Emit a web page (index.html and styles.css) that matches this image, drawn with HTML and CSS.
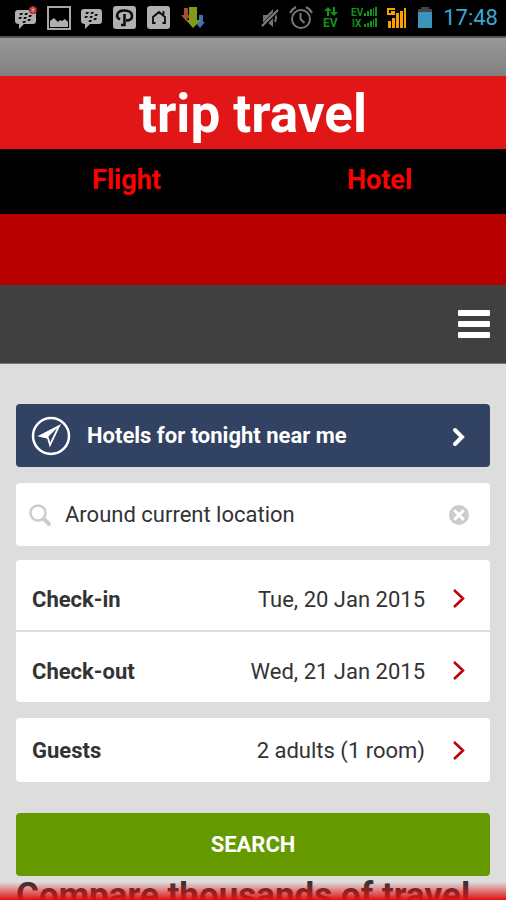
FILE: index.html
```html
<!DOCTYPE html>
<html lang="en">
<head>
<meta charset="utf-8">
<meta name="viewport" content="width=device-width, initial-scale=1">
<title>trip travel</title>
<link rel="stylesheet" href="styles.css">
</head>
<body>
<div class="app">
  <div class="status">
    <div class="status-group notices">
      <svg width="22" height="24" viewBox="0 0 22 24" aria-hidden="true">
        <path d="M3 4h15q3 0 3 3v8q0 3-3 3H9l-5 5v-5q-4 0-4-3V7q0-3 3-3z" fill="#b0b0b0"/>
        <path d="M5 7h3l-1 2H4.500zM10 7h3l-1 2H9.500zM4 11h3l-1 2H3.500zM9 11h3l-1 2H8.500zM14 9h3l-1 2h-2.500zM8 15h3l-1 2H7.500zM13 13h3l-1 2h-2.500z" fill="#111"/>
        <circle cx="18" cy="4" r="4" fill="#a51d24"/>
        <path d="M18 1v6M15.500 2.500l5 3M20.500 2.500l-5 3" stroke="#d8a0a0" stroke-width="1"/>
      </svg>
      <svg width="24" height="24" viewBox="0 0 24 24" aria-hidden="true">
        <path d="M1 1h22v22H1z" fill="none" stroke="#a8a8a8" stroke-width="2"/>
        <path d="M3 21v-6l4-3 4 4 2-2 2 1 3-2 3 3v5z" fill="#b0b0b0"/>
      </svg>
      <svg width="22" height="24" viewBox="0 0 22 24" aria-hidden="true">
        <path d="M3 3h15q3 0 3 3v9q0 3-3 3H9l-5 5v-5q-4 0-4-3V6q0-3 3-3z" fill="#b0b0b0"/>
        <path d="M5 6h3l-1 2H4.500zM10 6h3l-1 2H9.500zM4 10h3l-1 2H3.500zM9 10h3l-1 2H8.500zM14 8h3l-1 2h-2.500zM8 14h3l-1 2H7.500zM13 12h3l-1 2h-2.500z" fill="#111"/>
      </svg>
      <svg width="24" height="24" viewBox="0 0 24 24" aria-hidden="true">
        <rect width="23" height="23" y="0" rx="3" fill="#b0b0b0"/>
        <path d="M7 13.500C2 11 4 4.500 11 4.500c5 0 8 2 8 5.500S16 14.500 13 14.500M11.500 8v12M8 19h4" fill="none" stroke="#0a0a0a" stroke-width="2.500"/>
      </svg>
      <svg width="24" height="24" viewBox="0 0 24 24" aria-hidden="true">
        <rect width="23" height="23" y="0" rx="3" fill="#b0b0b0"/>
        <path d="M8.500 17H6v-6l6-5 6 5v6h-2.500M16.500 5v5" fill="none" stroke="#0a0a0a" stroke-width="1.800"/>
      </svg>
      <svg width="24" height="24" viewBox="0 0 24 24" aria-hidden="true">
        <path d="M3 2h4v7h3l-5 6-5-6h3z" fill="#a64b3d"/>
        <path d="M18 9h4v7h2l-5 6-5-6h4z" fill="#3975b5"/>
        <path d="M8 1h8v13h4l-8 8-7-8h3z" fill="#829b16"/>
      </svg>
    </div>
    <div class="status-group signals">
      <svg width="18" height="22" viewBox="0 0 18 22" aria-hidden="true">
        <path d="M2 8h4l6-6v18l-6-5H2z" fill="#717171"/>
        <path d="M14 7q2 4 0 8" fill="none" stroke="#717171" stroke-width="2"/>
        <path d="M1 20L17 3" stroke="#000" stroke-width="4"/>
        <path d="M1 19L17 3" stroke="#858585" stroke-width="2"/>
      </svg>
      <svg width="24" height="24" viewBox="0 0 24 24" aria-hidden="true">
        <g fill="none" stroke="#777" stroke-width="2">
          <circle cx="12" cy="13" r="9"/>
          <path d="M11.500 7v6l4 4M1 7q2-4 6-6M23 7q-2-4-6-6"/>
        </g>
      </svg>
      <svg width="18" height="24" viewBox="0 0 18 24" aria-hidden="true">
        <path d="M5 1l4 4H6v5H4V5H1zM11 10l4-4h-3V1h-2v5H7z" fill="#12941a"/>
        <text x="0" y="21" class="mark mark-large">EV</text>
      </svg>
      <svg width="26" height="24" viewBox="0 0 26 24" aria-hidden="true">
        <text x="0" y="10" class="mark">EV</text>
        <text x="1" y="21" class="mark">IX</text>
        <path d="M13 7h2v3h-2zM16 5h2v5h-2zM19 3h2v7h-2zM22 2h1v8h-1zM24 1h2v9h-2zM13 18h2v3h-2zM16 17h2v4h-2zM19 15h2v6h-2zM22 13h1v8h-1zM24 12h2v9h-2z" fill="#12941a"/>
      </svg>
      <svg width="20" height="22" viewBox="0 0 20 22" aria-hidden="true">
        <path d="M1 14h3v7H1zM5 11h3v10H5zM9 6h3v15H9zM13 4h3v17h-3zM17 1h2v20h-2z" fill="#f9a000"/>
        <path d="M8 2H1v5h6V5H4" fill="none" stroke="#f9a000" stroke-width="2"/>
      </svg>
      <svg width="16" height="24" viewBox="0 0 16 24" aria-hidden="true">
        <path d="M4 1h8v2h3v3H1V3h3z" fill="#444"/>
        <path d="M1 6h14v16H1z" fill="#3b94bb"/>
      </svg>
      <time class="clock">17:48</time>
    </div>
  </div>
  <div class="titlebar"></div>
  <header class="brand"><h1>trip travel</h1></header>
  <nav class="tabs">
    <a href="#flight">Flight</a>
    <a href="#hotel">Hotel</a>
  </nav>
  <div class="band"></div>
  <div class="toolbar">
    <button class="menu" type="button" aria-label="Menu"><span></span><span></span><span></span></button>
  </div>
  <main class="content">
    <button class="nearby" type="button">
      <svg width="40" height="40" viewBox="0 0 40 40" aria-hidden="true">
        <circle cx="20" cy="20" r="18" fill="none" stroke="#fff" stroke-width="2.500"/>
        <path d="M28 10L8 20l8 2z" fill="#fff"/>
        <path d="M28 10L9 20l8 2 2 7z" fill="none" stroke="#fff" stroke-width="1.800"/>
      </svg>
      <span class="nearby-label">Hotels for tonight near me</span>
      <svg width="14" height="20" viewBox="0 0 14 20" aria-hidden="true">
        <path d="M3 4l7 7-7 7" fill="none" stroke="#fff" stroke-width="4" stroke-linecap="round"/>
      </svg>
    </button>
    <div class="card search-box">
      <svg width="24" height="24" viewBox="0 0 24 24" aria-hidden="true">
        <circle cx="9" cy="10" r="7.500" fill="none" stroke="#ccc" stroke-width="2.500"/>
        <path d="M15 16l5 5" stroke="#ccc" stroke-width="4" stroke-linecap="round"/>
      </svg>
      <input type="text" value="Around current location" aria-label="Destination">
      <button class="clear" type="button" aria-label="Clear">
        <svg width="22" height="22" viewBox="0 0 22 22" aria-hidden="true">
          <circle cx="11" cy="11" r="10" fill="#ccc"/>
          <path d="M7 7l8 8M15 7l-8 8" stroke="#fff" stroke-width="3" stroke-linecap="round"/>
        </svg>
      </button>
    </div>
    <div class="card dates">
      <button class="row" type="button">
        <span class="name">Check-in</span><span class="value">Tue, 20 Jan 2015</span>
        <svg width="14" height="20" viewBox="0 0 14 20" aria-hidden="true"><path d="M2 1l9 8.500-9 8.500" fill="none" stroke="#c00008" stroke-width="2.600"/></svg>
      </button>
      <button class="row" type="button">
        <span class="name">Check-out</span><span class="value">Wed, 21 Jan 2015</span>
        <svg width="14" height="20" viewBox="0 0 14 20" aria-hidden="true"><path d="M2 1l9 8.500-9 8.500" fill="none" stroke="#c00008" stroke-width="2.600"/></svg>
      </button>
    </div>
    <div class="card guests">
      <button class="row" type="button">
        <span class="name">Guests</span><span class="value">2 adults (1 room)</span>
        <svg width="14" height="20" viewBox="0 0 14 20" aria-hidden="true"><path d="M2 2l9 8.500-9 8.500" fill="none" stroke="#c00008" stroke-width="2.600"/></svg>
      </button>
    </div>
    <button class="submit" type="submit">SEARCH</button>
    <h2>Compare thousands of travel</h2>
  </main>
  <div class="fade"></div>
</div>
</body>
</html>
```
FILE: styles.css
```css
* {
  box-sizing: border-box;
}

body {
  margin: 0;
  font-family: Roboto, "Liberation Sans", sans-serif;
  color: #333;
  background: #ddd;
}

button,
input {
  margin: 0;
  padding: 0;
  border: 0;
  background: none;
  color: inherit;
  font: inherit;
}

svg {
  display: block;
  flex: none;
  overflow: visible;
}

.app {
  position: relative;
  height: 100vh;
  overflow: hidden;
}

.status {
  display: flex;
  justify-content: space-between;
  align-items: center;
  height: 36px;
  padding: 0 8px 0 15px;
  background: #000;
}

.status-group {
  display: flex;
  align-items: center;
}

.notices {
  gap: 10px;
}

.signals {
  gap: 10px;
}

.mark {
  font: bold 10px Roboto, sans-serif;
  fill: #12941a;
}

.mark-large {
  font-size: 12px;
}

.clock {
  font-size: 22px;
  line-height: 36px;
  color: #38a8d8;
}

.titlebar {
  height: 40px;
  border-top: 2px solid #555;
  background: linear-gradient(#999, #808080);
}

.brand {
  height: 73px;
  background: #e11717;
}

h1 {
  margin: 0;
  font-size: 53px;
  line-height: 76px;
  text-align: center;
  color: #fff;
}

.tabs {
  display: grid;
  grid-template-columns: 1fr 1fr;
  height: 65px;
  background: #000;
}

.tabs a {
  font-size: 27px;
  font-weight: bold;
  line-height: 62px;
  text-align: center;
  text-decoration: none;
  color: #f00;
}

.band {
  height: 71px;
  background: #b80000;
}

.toolbar {
  display: flex;
  justify-content: flex-end;
  align-items: center;
  height: 79px;
  padding: 0 16px;
  border-bottom: 1px solid #777;
  background: #404040;
}

.menu {
  display: grid;
  gap: 5px;
  width: 32px;
}

.menu span {
  height: 6px;
  border-radius: 1px;
  background: #fff;
}

.content {
  padding: 40px 16px 0;
}

.nearby {
  display: flex;
  align-items: center;
  width: 100%;
  height: 63px;
  padding: 0 24px 0 15px;
  border-radius: 4px;
  background: #314262;
  color: #fff;
}

.nearby-label {
  flex: 1;
  padding-left: 16px;
  font-size: 22px;
  font-weight: bold;
  text-align: left;
}

.card {
  border-radius: 4px;
  background: #fff;
}

.search-box {
  display: flex;
  align-items: center;
  height: 63px;
  margin-top: 16px;
  padding: 0 20px 0 13px;
}

.search-box input {
  flex: 1;
  min-width: 0;
  padding-left: 12px;
  font-size: 22px;
}

.row {
  display: flex;
  align-items: center;
  width: 100%;
  height: 64px;
  padding: 0 24px 0 16px;
  font-size: 22px;
}

.name {
  flex: 1;
  font-weight: bold;
  text-align: left;
}

.value {
  margin-right: 27px;
}

.dates {
  margin-top: 14px;
}

.dates .row {
  height: 72px;
  padding-top: 8px;
}

.dates .row:first-child {
  height: 70px;
}

.dates .row + .row {
  border-top: 2px solid #ddd;
}

.guests {
  margin-top: 16px;
}

.submit {
  display: block;
  width: 100%;
  height: 63px;
  margin-top: 31px;
  border-radius: 4px;
  background: #690;
  font-size: 22px;
  font-weight: bold;
  color: #fff;
}

h2 {
  margin: 0;
  font-size: 35px;
  line-height: 40px;
  white-space: nowrap;
}

.fade {
  position: absolute;
  right: 0;
  bottom: 0;
  left: 0;
  height: 18px;
  background: linear-gradient(rgba(225, 17, 17, 0), rgba(225, 17, 17, 0.500) 50%, #e11111);
}
```
